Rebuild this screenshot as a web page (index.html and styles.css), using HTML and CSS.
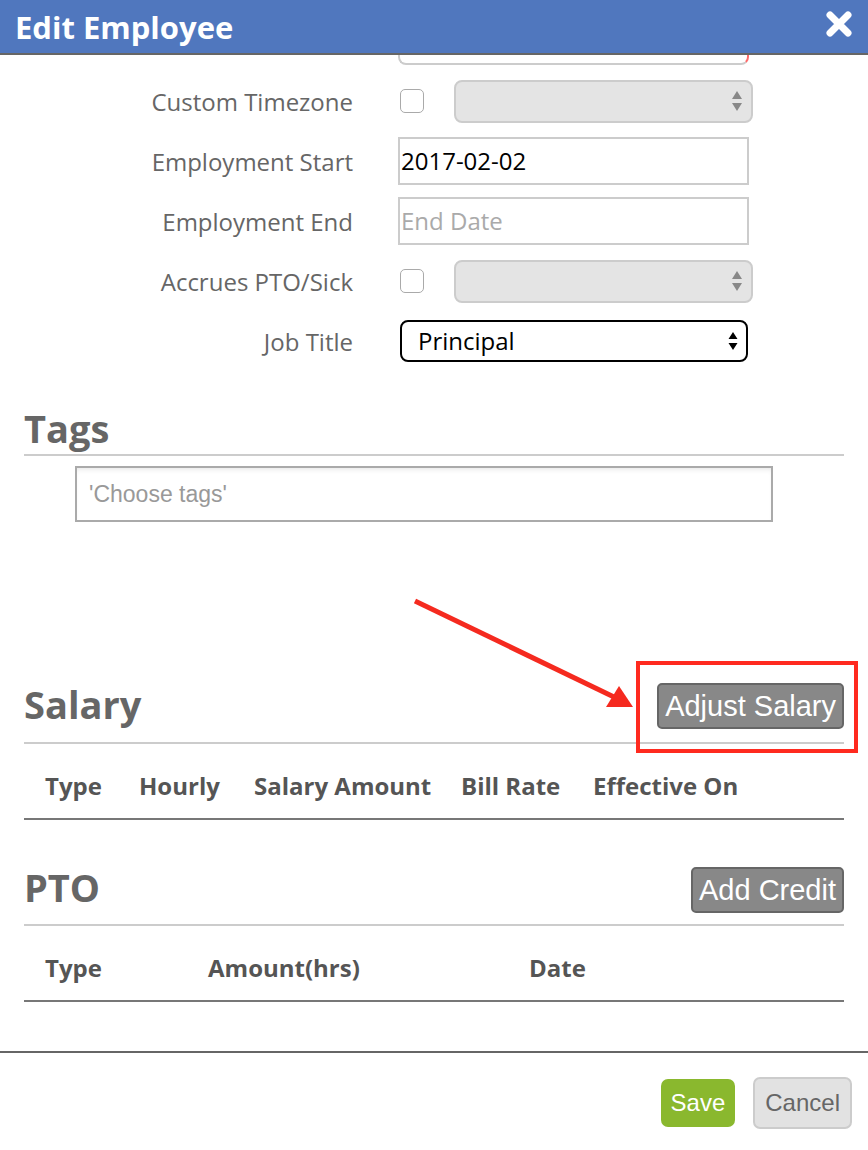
FILE: index.html
```html
<!DOCTYPE html>
<html lang="en">

<head>
    <meta charset="UTF-8">
    <meta name="viewport" content="width=device-width, initial-scale=1.0">
    <title>Edit Employee</title>
    <link rel="stylesheet" href="styles.css">
</head>

<body>

    <div class="modal">
        <div class="modal-header">
            <h1 class="modal-title">Edit Employee</h1>
            <span class="modal-close">
                <svg width="26" height="26" viewBox="0 0 26 26">
                    <path d="M4 4 L22 22 M22 4 L4 22" stroke="#fff" stroke-width="7" stroke-linecap="round" />
                </svg>
            </span>
        </div>

        <div class="modal-body">
            <!-- Employee fields -->
            <div class="fields">
                <div class="field field-cut">
                    <span class="field-label"></span>
                    <div class="field-control">
                        <div class="input input-round"></div>
                    </div>
                </div>

                <div class="field">
                    <span class="field-label">Custom Timezone</span>
                    <div class="field-control">
                        <span class="checkbox"></span>
                        <div class="select select-disabled">
                            <svg class="select-arrows" width="12" height="22" viewBox="0 0 12 22">
                                <path d="M6 1 L11 9 L1 9 Z M1 13 L11 13 L6 21 Z" fill="#888" />
                            </svg>
                        </div>
                    </div>
                </div>

                <div class="field">
                    <span class="field-label">Employment Start</span>
                    <div class="field-control">
                        <div class="input">2017-02-02</div>
                    </div>
                </div>

                <div class="field">
                    <span class="field-label">Employment End</span>
                    <div class="field-control">
                        <div class="input input-placeholder">End Date</div>
                    </div>
                </div>

                <div class="field">
                    <span class="field-label">Accrues PTO/Sick</span>
                    <div class="field-control">
                        <span class="checkbox"></span>
                        <div class="select select-disabled">
                            <svg class="select-arrows" width="12" height="22" viewBox="0 0 12 22">
                                <path d="M6 1 L11 9 L1 9 Z M1 13 L11 13 L6 21 Z" fill="#888" />
                            </svg>
                        </div>
                    </div>
                </div>

                <div class="field">
                    <span class="field-label">Job Title</span>
                    <div class="field-control">
                        <div class="select select-job">
                            Principal
                            <svg class="select-arrows" width="10" height="20" viewBox="0 0 10 20">
                                <path d="M5 1 L9.5 8 L0.5 8 Z M0.5 12 L9.5 12 L5 19 Z" fill="#000" />
                            </svg>
                        </div>
                    </div>
                </div>
            </div>

            <!-- Tags -->
            <div class="section section-tags">
                <h2 class="section-title">Tags</h2>
                <div class="tags-input">'Choose tags'</div>
            </div>

            <!-- Salary -->
            <div class="section section-salary">
                <div class="section-head">
                    <h2 class="section-title">Salary</h2>
                    <span class="highlight">
                        <button class="btn btn-gray">Adjust Salary</button>
                    </span>
                </div>
                <div class="table-head salary-cols">
                    <span>Type</span>
                    <span>Hourly</span>
                    <span>Salary Amount</span>
                    <span>Bill Rate</span>
                    <span>Effective On</span>
                </div>
            </div>

            <!-- PTO -->
            <div class="section section-pto">
                <div class="section-head">
                    <h2 class="section-title">PTO</h2>
                    <button class="btn btn-gray">Add Credit</button>
                </div>
                <div class="table-head pto-cols">
                    <span>Type</span>
                    <span>Amount(hrs)</span>
                    <span>Date</span>
                </div>
            </div>

            <!-- annotation arrow -->
            <svg class="arrow" width="868" height="1150" viewBox="0 0 868 1150">
                <line x1="415" y1="601" x2="614" y2="697" stroke="#f52a1f" stroke-width="5" />
                <polygon points="633,707 619,686 606,707" fill="#f52a1f" />
            </svg>
        </div>

        <div class="modal-footer">
            <button class="btn btn-save">Save</button>
            <button class="btn btn-cancel">Cancel</button>
        </div>
    </div>

</body>

</html>
```

FILE: styles.css
```css
body {
    font-family: "Open Sans", sans-serif;
    background-color: #fff;
    margin: 0;
    padding: 0;
}

.modal {
    width: 868px;
    height: 1150px;
    display: flex;
    flex-direction: column;
    overflow: hidden;
}

.modal-header {
    height: 53px;
    flex-shrink: 0;
    background-color: #5077be;
    border-bottom: 2px solid #666;
    display: flex;
    align-items: center;
    justify-content: space-between;
    padding: 0 16px 0 15px;
}

.modal-title {
    margin: 0;
    color: #fff;
    font-size: 31px;
    font-weight: 700;
}

.modal-close {
    display: flex;
    margin-top: -6px;
}

.modal-body {
    position: relative;
    height: 996px;
    flex-shrink: 0;
    overflow: hidden;
}

/* fields */
.fields {
    margin-top: -38px;
}

.field {
    display: grid;
    grid-template-columns: 353px 1fr;
    column-gap: 45px;
    align-items: center;
    height: 48px;
    margin-bottom: 12px;
}

.field-label {
    text-align: right;
    color: #666;
    font-size: 24px;
}

.field-control {
    display: flex;
    align-items: center;
}

.input {
    box-sizing: border-box;
    width: 351px;
    height: 48px;
    border: 2px solid #ccc;
    padding: 0 1px;
    font-size: 24px;
    line-height: 44px;
    color: #000;
}

.input-round {
    border-radius: 8px;
    border-right-color: #ff6a6a;
}

.input-placeholder {
    color: #aaa;
}

.checkbox {
    box-sizing: border-box;
    width: 24px;
    height: 24px;
    margin-left: 2px;
    border: 1px solid #aaa;
    border-radius: 5px;
    background-color: #fff;
}

.select {
    position: relative;
    box-sizing: border-box;
    height: 43px;
}

.select-disabled {
    width: 299px;
    margin-left: 30px;
    background-color: #e4e4e4;
    border: 2px solid #ccc;
    border-radius: 8px;
}

.select-job {
    width: 348px;
    height: 42px;
    margin-left: 2px;
    border: 2px solid #000;
    border-radius: 8px;
    padding-left: 16px;
    font-size: 24px;
    line-height: 38px;
    color: #000;
}

.select-arrows {
    position: absolute;
    right: 8px;
    top: 50%;
    margin-top: -11px;
}

.select-job .select-arrows {
    right: 8px;
    margin-top: -10px;
}

/* sections */
.section {
    padding: 0 24px;
}

.section-title {
    margin: 0;
    color: #666;
    font-size: 38px;
    font-weight: 700;
    line-height: 48px;
}

.section-tags {
    margin-top: 39px;
}

.section-tags .section-title {
    padding-bottom: 2px;
    border-bottom: 2px solid #ccc;
}

.tags-input {
    box-sizing: border-box;
    width: 698px;
    height: 56px;
    margin: 10px 0 0 51px;
    border: 2px solid #aaa;
    box-shadow: inset 0 4px 6px -4px rgba(0, 0, 0, 0.15);
    padding-left: 12px;
    font-family: "Liberation Sans", Arial, sans-serif;
    font-size: 23px;
    line-height: 52px;
    color: #999;
}

.section-head {
    display: flex;
    align-items: center;
    justify-content: space-between;
    border-bottom: 2px solid #ccc;
}

.section-salary {
    margin-top: 144px;
}

.section-salary .section-head {
    height: 76px;
}

.section-pto {
    margin-top: 47px;
}

.section-pto .section-head {
    height: 57px;
    align-items: flex-start;
}

.section-pto .section-title {
    line-height: 40px;
}

.highlight {
    position: relative;
    display: flex;
    margin-top: 4px;
}

.highlight::after {
    content: "";
    position: absolute;
    left: -21px;
    top: -22px;
    right: -14px;
    bottom: -24px;
    border: 4px solid #ff2a1f;
}

.btn {
    font-family: "Liberation Sans", Arial, sans-serif;
    border-radius: 5px;
    cursor: pointer;
}

.btn-gray {
    height: 46px;
    padding: 0 6px;
    background-color: #888;
    border: 2px solid #666;
    color: #fff;
    font-size: 29px;
}

.table-head {
    box-sizing: border-box;
    display: grid;
    align-items: center;
    height: 76px;
    padding: 8px 0 0 21px;
    border-bottom: 2px solid #777;
    color: #555;
    font-size: 24px;
    font-weight: 700;
}

.salary-cols {
    grid-template-columns: 94px 115px 207px 132px auto;
}

.pto-cols {
    grid-template-columns: 163px 321px auto;
}

.arrow {
    position: absolute;
    left: 0;
    top: -55px;
    pointer-events: none;
}

/* footer */
.modal-footer {
    border-top: 2px solid #666;
    display: flex;
    justify-content: flex-end;
    align-items: center;
    gap: 18px;
    flex: 1;
    padding: 2px 16px 0 0;
}

.btn-save {
    height: 48px;
    padding: 0 10px;
    background-color: #8ab82e;
    border: none;
    color: #fff;
    font-size: 24px;
    border-radius: 7px;
}

.btn-cancel {
    height: 52px;
    padding: 0 10px;
    background-color: #e2e2e2;
    border: 2px solid #ccc;
    color: #666;
    font-size: 24px;
    border-radius: 7px;
}
```
